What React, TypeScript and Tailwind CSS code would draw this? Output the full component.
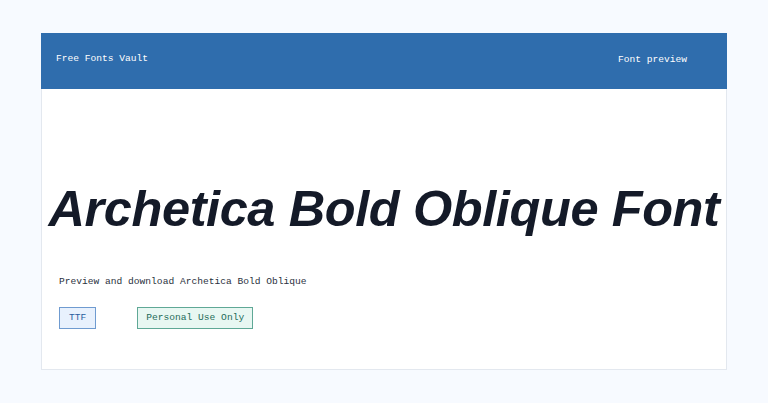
import React from 'react'

const mono = { fontFamily: '"Liberation Mono", "DejaVu Sans Mono", monospace' }

export default function App() {
  return (
    <div className="min-h-[403px] w-full bg-[#f7faff] pt-[33px]" style={mono}>
      <div className="mx-auto w-[686px] border border-[#e3e8ef] bg-white">
        {/* Top bar */}
        <header className="-m-px flex h-[56px] items-start justify-between bg-[#2f6dad] pl-[15px] pr-[40px] pt-[19px] text-[9.6px] text-white">
          <span>Free Fonts Vault</span>
          <span className="mt-[1px]">Font preview</span>
        </header>

        <main className="px-[17px] pb-[40px]">
          <h1
            className="-mx-[17px] whitespace-nowrap pt-[96px] text-center text-[50.5px] font-bold italic leading-none tracking-[-0.4px] text-[#141a28]"
            style={{ fontFamily: '"Liberation Sans", Arial, sans-serif' }}
          >
            Archetica Bold Oblique Font
          </h1>

          <p className="mt-[40px] text-[9.6px] text-[#2a3140]">
            Preview and download Archetica Bold Oblique
          </p>

          <div className="mt-[18px] flex items-center">
            <span className="flex h-[22px] items-center border border-[#6f9bd0] bg-[#e8f1fd] px-[9px] text-[9.6px] text-[#2a5d9e]">
              TTF
            </span>
            <span className="ml-[41px] flex h-[22px] items-center border border-[#5fa896] bg-[#e8f7f2] px-[8px] text-[9.6px] text-[#1d6b58]">
              Personal Use Only
            </span>
          </div>
        </main>
      </div>
    </div>
  )
}
